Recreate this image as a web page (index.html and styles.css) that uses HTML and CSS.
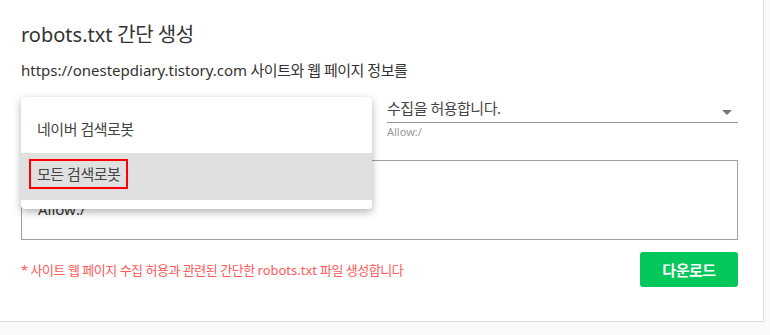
FILE: index.html
```html
<!DOCTYPE html>
<html lang="ko">
<head>
    <meta charset="UTF-8">
    <title>robots.txt 간단 생성</title>
    <link rel="stylesheet" href="styles.css">
</head>
<body>
<div class="card">
    <h2 class="title"><span class="en">robots.txt</span> 간단 생성</h2>
    <p class="desc"><span class="en">https://onestepdiary.tistory.com</span> 사이트와 웹 페이지 정보를</p>

    <div class="fields">
        <div class="field">
            <div class="select"><i class="arrow"></i></div>
            <div class="hint"></div>
            <ul class="menu">
                <li>네이버 검색로봇</li>
                <li class="current"><span class="mark">모든 검색로봇</span></li>
            </ul>
        </div>
        <div class="field">
            <div class="select">수집을 허용합니다.<i class="arrow"></i></div>
            <div class="hint">Allow:/</div>
        </div>
    </div>

    <div class="output">
Allow:/</div>

    <div class="foot">
        <p class="note">* 사이트 웹 페이지 수집 허용과 관련된 간단한 <span class="en">robots.txt</span> 파일 생성합니다</p>
        <button class="btn">다운로드</button>
    </div>
</div>
</body>
</html>
```

FILE: styles.css
```css
body, div, ul, li, h2, p {
    margin: 0;
    padding: 0;
}

ul {
    list-style-type: none;
}

body {
    background: #f9f9f9;
    font-family: "Noto Sans", "Noto Sans CJK KR", sans-serif;
    color: #333;
    letter-spacing: -0.03em;
}

.en {
    letter-spacing: 0;
}

.card {
    width: 717px;
    height: 288px;
    padding: 20px 25px 13px 21px;
    background: #fff;
    border-right: 1px solid #ddd;
    border-bottom: 1px solid #ddd;
}

.title {
    font-size: 20px;
    font-weight: 400;
    line-height: 30px;
    color: #333;
}

.desc {
    margin-top: 9px;
    font-size: 15px;
    line-height: 22px;
}

.fields {
    display: flex;
    gap: 15px;
    margin-top: 16px;
}

.field {
    position: relative;
    flex: 1;
}

.select {
    position: relative;
    height: 22px;
    padding-bottom: 3px;
    border-bottom: 1px solid #949494;
    font-size: 15px;
    line-height: 22px;
    color: #444;
}

.arrow {
    position: absolute;
    right: 6px;
    top: 13px;
    border-top: 5px solid #757575;
    border-left: 5px solid transparent;
    border-right: 5px solid transparent;
}

.hint {
    height: 14px;
    margin-top: 2px;
    font-size: 11px;
    line-height: 14px;
    color: #999;
    letter-spacing: 0;
}

.menu {
    position: absolute;
    left: 0;
    top: 0;
    width: 100%;
    padding: 9px 0;
    background: #fff;
    border-radius: 4px;
    box-shadow: 0 3px 8px rgba(0, 0, 0, 0.3);
    z-index: 10;
}

.menu li {
    height: 47px;
    padding: 0 16px;
    font-size: 15px;
    line-height: 47px;
    color: #444;
}

.menu li.current {
    background: #e0e0e0;
}

.mark {
    display: inline-block;
    margin-left: -8px;
    padding: 0 6px;
    line-height: 26px;
    border: 2px solid #f00;
    vertical-align: 2px;
}

.output {
    height: 54px;
    margin-top: 21px;
    padding: 12px 16px;
    border: 1px solid #a0a0a0;
    font-size: 15px;
    line-height: 24px;
    color: #333;
    white-space: pre;
    letter-spacing: 0;
}

.foot {
    display: flex;
    align-items: center;
    justify-content: space-between;
    margin-top: 12px;
}

.note {
    font-size: 13px;
    color: #ff5a5a;
}

.btn {
    width: 98px;
    height: 35px;
    border: 0;
    border-radius: 3px;
    background: #03c75a;
    color: #fff;
    font-family: "Noto Sans", "Noto Sans CJK KR", sans-serif;
    font-size: 15px;
    font-weight: 700;
    letter-spacing: -0.03em;
}
```
